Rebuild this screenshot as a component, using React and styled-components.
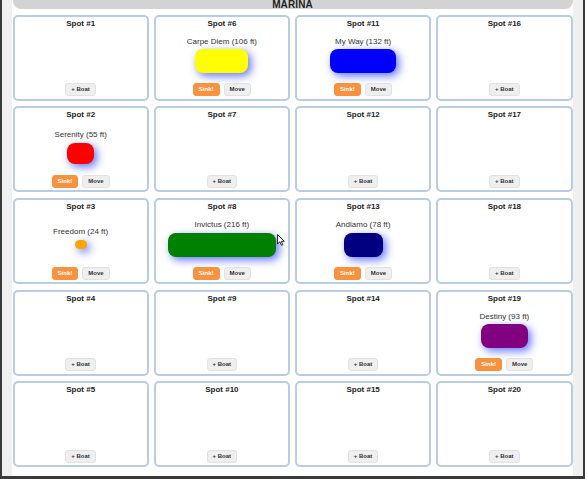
import React from "react";
import styled, { createGlobalStyle } from "styled-components";

const spots = [
  { id: 1 },
  { id: 2, boat: { name: "Serenity", length: 55, color: "red" } },
  { id: 3, boat: { name: "Freedom", length: 24, color: "orange" } },
  { id: 4 },
  { id: 5 },
  { id: 6, boat: { name: "Carpe Diem", length: 106, color: "yellow" } },
  { id: 7 },
  { id: 8, boat: { name: "Invictus", length: 216, color: "green" } },
  { id: 9 },
  { id: 10 },
  { id: 11, boat: { name: "My Way", length: 132, color: "blue" } },
  { id: 12 },
  { id: 13, boat: { name: "Andiamo", length: 78, color: "navy" } },
  { id: 14 },
  { id: 15 },
  { id: 16 },
  { id: 17 },
  { id: 18 },
  { id: 19, boat: { name: "Destiny", length: 93, color: "purple" } },
  { id: 20 },
];

const GlobalStyle = createGlobalStyle`
  html, body {
    margin: 0;
    padding: 0;
    background: #3a3a3a;
  }
  body {
    font-family: "Liberation Sans", Arial, sans-serif;
  }
`;

const Spot = ({ spot }) => {
  const { boat } = spot;
  return (
    <Card>
      <Title>Spot #{spot.id}</Title>
      <Body>
        {boat && (
          <>
            <BoatName>
              {boat.name} ({boat.length} ft)
            </BoatName>
            <Boat
              $color={boat.color}
              style={{
                width: boat.length / 2,
                height: Math.min(24, boat.length * 0.38),
              }}
            />
          </>
        )}
      </Body>
      <Actions>
        {boat ? (
          <>
            <Button $variant="sink">Sink!</Button>
            <Button>Move</Button>
          </>
        ) : (
          <Button>+ Boat</Button>
        )}
      </Actions>
    </Card>
  );
};

const App = () => {
  return (
    <>
      <GlobalStyle />
      <Window>
        <Gutter />
        <Main>
          <Header>MARINA</Header>
          <Grid>
            {spots.map((spot) => (
              <Spot key={spot.id} spot={spot} />
            ))}
          </Grid>
        </Main>
        <Gutter />
        <Cursor width="8" height="12" viewBox="0 0 8 12">
          <path
            d="M0.5 0.5 L0.5 10 L2.8 7.8 L4.4 11.3 L5.8 10.7 L4.3 7.3 L7.3 7.3 Z"
            fill="#fff"
            stroke="#111"
            strokeWidth="0.9"
            strokeLinejoin="round"
          />
        </Cursor>
      </Window>
    </>
  );
};

export default App;

const Window = styled.div`
  position: relative;
  display: flex;
  width: 585px;
  height: 479px;
  box-sizing: border-box;
  border-left: 2px solid #3a3a3a;
  border-right: 2px solid #3a3a3a;
  border-bottom: 3px solid #3a3a3a;
  overflow: hidden;
`;

const Gutter = styled.div`
  width: 10px;
  flex-shrink: 0;
  background: #f0f0f0;
`;

const Main = styled.div`
  flex: 1;
  background: #fff;
  padding: 0 0.5px;
`;

const Header = styled.div`
  margin-top: -3px;
  height: 12.3px;
  padding-top: 2.2px;
  box-sizing: border-box;
  background: #d3d3d3;
  border-radius: 0 0 8px 8px;
  text-align: center;
  font-size: 10px;
  line-height: 11.5px;
  font-weight: bold;
  color: #222;
  letter-spacing: 0.1px;
`;

const Grid = styled.div`
  display: grid;
  grid-template-columns: repeat(4, 1fr);
  grid-template-rows: repeat(5, 86px);
  grid-auto-flow: column;
  column-gap: 5px;
  row-gap: 5.65px;
  margin-top: 5.4px;
`;

const Card = styled.div`
  display: flex;
  flex-direction: column;
  align-items: center;
  box-sizing: border-box;
  padding: 2px 4px 2.3px;
  background: #fff;
  border: 2px solid #b9cbe5;
  border-radius: 5px;
`;

const Title = styled.div`
  font-size: 8px;
  line-height: 10px;
  font-weight: bold;
  color: #222;
`;

const Body = styled.div`
  flex: 1;
  display: flex;
  flex-direction: column;
  align-items: center;
  justify-content: center;
  padding-bottom: 2px;
`;

const BoatName = styled.div`
  font-size: 8px;
  line-height: 10px;
  color: #333;
  margin-bottom: 2.9px;
`;

const Boat = styled.div`
  background: ${(p) => p.$color};
  border-radius: 8px;
  box-shadow: 3px 3px 8px rgba(50, 70, 255, 0.75);
`;

const Actions = styled.div`
  display: flex;
  gap: 4px;
`;

const Button = styled.button`
  height: 13px;
  padding: 0 5px;
  font-family: "Liberation Sans", Arial, sans-serif;
  font-size: 6px;
  font-weight: bold;
  line-height: 11px;
  border-radius: 3px;
  cursor: pointer;
  border: 1px solid ${(p) => (p.$variant === "sink" ? "#f7923f" : "#e2e2e2")};
  background: ${(p) => (p.$variant === "sink" ? "#f7923f" : "#efefef")};
  color: ${(p) => (p.$variant === "sink" ? "#fff" : "#333")};
`;

const Cursor = styled.svg`
  position: absolute;
  left: 275px;
  top: 234px;
`;
